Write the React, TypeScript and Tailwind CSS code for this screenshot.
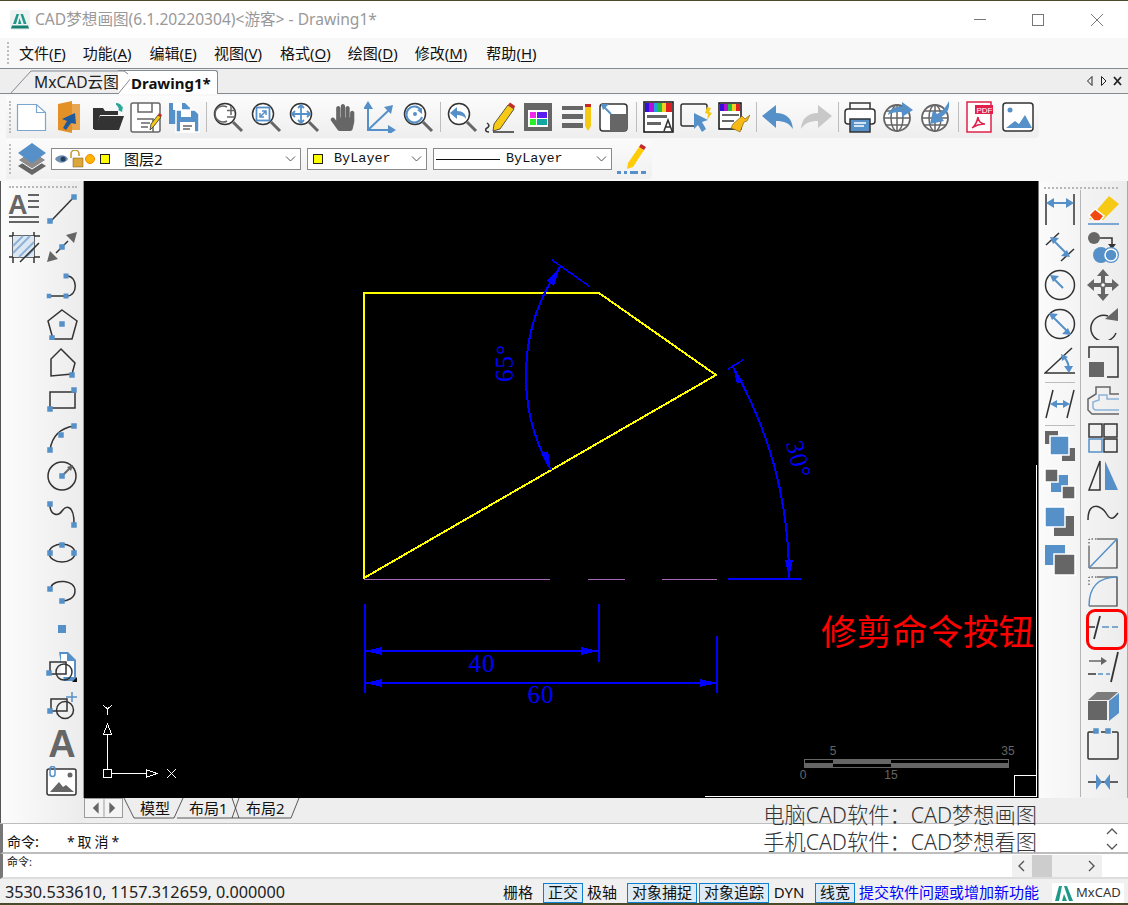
import type { ReactNode } from "react";
import { FaHandPaper } from "react-icons/fa";

const B = "#5590c8";
const G = "#666666";
const D = "#333333";

function Ic({ children, size = 32 }: { children?: ReactNode; size?: number }) {
  return (
    <svg width={size} height={size} viewBox="0 0 32 32" fill="none" stroke={D} strokeWidth={1.5}>
      {children}
    </svg>
  );
}

function N({ x, y, s = 5.5 }: { x: number; y: number; s?: number }) {
  return <rect x={x - s / 2} y={y - s / 2} width={s} height={s} fill={B} stroke="none" />;
}

function Lens({ children }: { children?: ReactNode }) {
  return (
    <Ic>
      <circle cx="13" cy="13" r="10.5" fill="#fff" stroke={D} />
      <path d="M21 21l9 9" stroke={G} strokeWidth={3} />
      {children}
    </Ic>
  );
}

function Logo({ size }: { size: number }) {
  return (
    <svg width={size} height={size} viewBox="0 0 20 20">
      <rect width="20" height="20" rx="2" fill="#eef3f2" />
      <path d="M3 14L6.5 4h2.5L6 14zM8 14l1.5-6 2 6zM10.5 4H13l3.500 10h-2.800z" fill="#1f9a8a" />
      <path d="M2 15.500h16l1 3H1z" fill="#15806f" />
    </svg>
  );
}

const topIcons: ReactNode[][] = [
  [
    <Ic key="new"><path d="M1.500 3.500h19l9 8v18h-28z" stroke="#7aa7d0" strokeWidth={1.200} fill="#fff" /><path d="M20.500 3.500v8h9" stroke="#7aa7d0" strokeWidth={1.200} /></Ic>,
    <Ic key="forange"><path d="M4 3L18 0v32L4 29z" fill="#e39027" stroke="none" /><path d="M18 3h8v26h-8z" fill="#e8a650" stroke="none" /><path d="M21 12l1 11-5-1-5 7-3-2 4-7-5-2z" fill="#1e5a9c" stroke="none" /></Ic>,
    <Ic key="open"><path d="M1 28V7h10l2 3h13v4H8L4 28z" fill="#333" stroke="none" /><path d="M8 15h24l-5 14H2z" fill="#333" stroke="none" /><path d="M24 2c3 0 5 1 6 4l1-1-1 6-4-2 1-1c-1-2-2-4-3-4z" fill="#2aa79b" stroke="none" /></Ic>,
    <Ic key="saveas"><rect x="1" y="2" width="29" height="29" rx="2" stroke={G} fill="#fff" /><path d="M8 2v9h14V2M7 18h16v13M11 22h9M11 26h7" stroke={G} /><path d="M20 29l1-6 7-9 3 2-7 9z" fill="#f6c915" stroke={D} strokeWidth={0.8} /><path d="M28 14l1-2 3 2-1 2z" fill="#c62828" stroke="none" /></Ic>,
    <Ic key="saveall"><path d="M1 2h16l5 5v16H1z" fill={B} stroke="none" /><path d="M5 2h9v7H5z" fill="#fff" stroke="none" /><path d="M8 9h19l4 4v18H8z" fill={B} stroke="#fff" /><path d="M13 9h10v7H13zM12 21h15v10H12z" fill="#fff" stroke="none" /><path d="M15 25h9M15 28h7" stroke={G} /></Ic>,
  ],
  [
    <Lens key="z1"><path d="M15 6a8 8 0 1 0 0 14M19 5v9M15 9.500h9M15 16h9" stroke={G} /></Lens>,
    <Lens key="z2"><rect x="6.500" y="6.500" width="13" height="13" stroke={B} strokeWidth={1.8} /><path d="M10 16l6-6M12 10h4v4M10 12v4h4" stroke={B} /></Lens>,
    <Lens key="z3"><path d="M13 4v18M4 13h18M10 7l3-3 3 3M10 19l3 3 3-3M7 10l-3 3 3 3M19 10l3 3-3 3" stroke={B} strokeWidth={1.8} /></Lens>,
    <span key="hand" className="text-[#666666] text-[27px] leading-none"><FaHandPaper /></span>,
    <Ic key="axes"><path d="M4 3v26h26M4 29l21-20" stroke={B} strokeWidth={2} /><path d="M4 0l5 8H-1zM32 29l-8 5v-10zM29 4l-2 9-7-7z" fill={B} stroke="none" /></Ic>,
    <Lens key="z4"><path d="M19 9a8 8 0 1 0 1 7" stroke={B} strokeWidth={2} /><circle cx="13" cy="13" r="2" fill={B} stroke="none" /><path d="M15 9l5-2v6z" fill={B} stroke="none" /></Lens>,
  ],
  [
    <Lens key="z5"><path d="M4 12l7-6v4c6 0 9 3 9 8-2-3-5-4-9-4v4z" fill={B} stroke="none" /></Lens>,
    <Ic key="pen"><path d="M5 31c-4 0-4-3-2-4s3-3 0-5M9 31h21" stroke={D} /><path d="M9 30l1-7L24 4l6 4-14 20z" fill="#f6c915" stroke={D} strokeWidth={0.8} /><path d="M24 4l2-2.500 5 3.500-1 3z" fill="#c62828" stroke="none" /></Ic>,
    <Ic key="tbl"><rect x="2" y="2" width="28" height="28" fill={G} stroke="none" /><rect x="6" y="9" width="20" height="17" fill="#fff" stroke="none" /><rect x="8" y="11" width="6" height="6" fill="#f028e8" stroke="none" /><rect x="15" y="11" width="10" height="6" fill="#5a1cf0" stroke="none" /><rect x="8" y="18" width="6" height="6" fill="#28f028" stroke="none" /><rect x="15" y="18" width="10" height="6" fill="#10a8a0" stroke="none" /></Ic>,
    <Ic key="ll"><path d="M2 5h21v4H2zM2 13h21v5H2zM2 22h21v5H2z" fill={G} stroke="none" /><path d="M25 5h6v20l-3 5-3-5z" fill="#f6c915" stroke="none" /><path d="M25 3h6v3h-6z" fill="#c62828" stroke="none" /></Ic>,
    <Ic key="cut"><rect x="2" y="3" width="27" height="27" rx="3" stroke={D} fill="#fff" /><path d="M12 13h17v15a2 2 0 0 1-2 2H12z" fill={G} stroke="none" /><path d="M4 4l9 9" stroke={B} strokeWidth={2} /><path d="M3 3h8l-6 6z" fill={B} stroke="none" /></Ic>,
  ],
  [
    <Ic key="c1"><rect x="2" y="1" width="29" height="30" stroke="#111" strokeWidth={1.500} fill="#fff" /><path d="M3 2h4v9H3z" fill="#3410d8" stroke="none" /><path d="M7 2h5v9H7z" fill="#b010d8" stroke="none" /><path d="M12 2h4v9h-4z" fill="#20a0e0" stroke="none" /><path d="M16 2h4v9h-4z" fill="#20c040" stroke="none" /><path d="M20 2h4v9h-4z" fill="#f0d020" stroke="none" /><path d="M24 2h6v9h-6z" fill="#e02020" stroke="none" /><path d="M5 14h20v3H5zM5 21h14v3H5z" fill={G} stroke="none" /><path d="M22 30l4-11 4 11M24 26h4" stroke={D} /></Ic>,
    <Ic key="c2"><path d="M14 25H3a2 2 0 0 1-2-2V5a2 2 0 0 1 2-2h22a2 2 0 0 1 2 2v5" stroke={D} /><path d="M14 12l14 7-6 2 4 7-4 3-4-7-4 4z" fill={B} stroke="none" /><path d="M27 6l4 1-2 4 3 1-5 7 1-6-3-1z" fill="#f6c915" stroke="none" /></Ic>,
    <Ic key="c3"><rect x="1" y="2" width="22" height="26" stroke="#111" fill="#fff" /><path d="M2 3h4v7H2z" fill="#3410d8" stroke="none" /><path d="M6 3h4v7H6z" fill="#b010d8" stroke="none" /><path d="M10 3h4v7h-4z" fill="#20c040" stroke="none" /><path d="M14 3h4v7h-4z" fill="#f0d020" stroke="none" /><path d="M18 3h4v7h-4z" fill="#e02020" stroke="none" /><path d="M4 13h17v2H4zM4 19h12v2H4z" fill={G} stroke="none" /><path d="M15 23l9-8 3 3 5-4-3 6-3 1-4 10-4-2-5-2z" fill="#f6b915" stroke="#8a6a10" strokeWidth={0.7} /></Ic>,
  ],
  [
    <Ic key="undo"><path d="M0 15L14 4v8c10 0 16 5 17 16-4-6-9-8-17-8v7z" fill={B} stroke="none" /></Ic>,
    <Ic key="redo"><path d="M32 15L18 4v8C8 12 2 17 1 28c4-6 9-8 17-8v7z" fill="#c8c8c8" stroke="none" /></Ic>,
  ],
  [
    <Ic key="print"><path d="M6 8V2h20v6" stroke={D} /><rect x="1" y="8" width="30" height="15" rx="3" stroke={D} fill="#fff" /><rect x="6" y="18" width="20" height="13" fill={B} stroke={D} /><path d="M10 22h12M10 25h10" stroke="#fff" /></Ic>,
    <Ic key="g1"><circle cx="15" cy="17" r="13" stroke={G} strokeWidth={1.800} fill="#fff" /><ellipse cx="15" cy="17" rx="6" ry="13" stroke={G} strokeWidth={1.500} /><path d="M2 17h26M4 10h22M4 24h22M15 4v26" stroke={G} strokeWidth={1.500} /><path d="M6 14c1-6 7-9 14-8V1l11 8-11 7v-5c-5 0-10 0-14 3z" fill={B} stroke="none" /></Ic>,
    <Ic key="g2"><circle cx="15" cy="17" r="13" stroke={G} strokeWidth={1.800} fill="#fff" /><ellipse cx="15" cy="17" rx="6" ry="13" stroke={G} strokeWidth={1.500} /><path d="M2 17h26M4 10h22M4 24h22M15 4v26" stroke={G} strokeWidth={1.500} /><path d="M29 0c1 8-2 13-8 16l3 4-14 3 3-14 4 4c5-2 9-7 12-13z" fill={B} stroke="none" /></Ic>,
  ],
  [
    <Ic key="pdf"><rect x="3" y="1" width="24" height="30" stroke="#e0204a" fill="#fff" /><rect x="11" y="4" width="18" height="9" fill="#e0204a" stroke="none" /><text x="12.500" y="11.500" fontSize="8" fill="#fff" stroke="none" fontFamily="Liberation Sans">PDF</text><path d="M8 27c3-2 5-6 6-11 0 4 3 7 7 7-4 0-9 1-13 4z" stroke="#e0204a" strokeWidth={1.500} /></Ic>,
    <Ic key="img"><rect x="1" y="2" width="30" height="28" rx="3" stroke={D} fill="#fff" /><circle cx="8" cy="9" r="2.500" fill={B} stroke="none" /><path d="M4 27l9-7 4 3 6-9 7 13z" fill={B} stroke="none" /></Ic>,
  ],
];

const leftIcons: (ReactNode | null)[] = [
  <div key="mt" className="relative w-[32px] h-[32px]">
    <span className="absolute left-0 top-0 text-[27px] leading-[24px] font-bold text-[#666666] font-['Liberation_Sans',sans-serif]">A</span>
    <Ic><path d="M20 2h11M20 8h11M20 14h11M1 24h30M1 29h30" stroke={D} /></Ic>
  </div>,
  <Ic key="line"><path d="M5 28L28 4" stroke={D} /><N x={28} y={4} /><N x={4} y={28} /></Ic>,
  <Ic key="hatch"><path d="M5 1v31M26 1v31M1 5h31M1 26h31" stroke={D} /><path d="M5 5h21v21H5z" fill="#dde7f2" stroke="none" /><path d="M5 15l10-10M5 22L22 5M11 26L26 11M18 26l8-8" stroke="#8cb2d8" strokeWidth={2} /><path d="M12 31L31 12" stroke={D} /></Ic>,
  <Ic key="xl"><path d="M10 22l12-12" stroke={D} /><path d="M31 1l-3 11-8-8zM1 31l3-11 8 8z" fill={G} stroke="none" /><N x={16} y={16} /></Ic>,
  null,
  <Ic key="pl"><path d="M5 27h16c11 0 11-20 0-20" stroke={D} /><N x={20} y={7} s={5} /><N x={20} y={27} s={5} /><N x={3} y={27} s={4.500} /></Ic>,
  null,
  <Ic key="pent"><path d="M16 2l15 11-5 18H7L2 13z" stroke={D} /><N x={16} y={16} /><N x={6} y={30} /></Ic>,
  null,
  <Ic key="poly"><path d="M15 3l14 14-3 11-21 2V13z" stroke={D} /><N x={26} y={29} /></Ic>,
  null,
  <Ic key="rect"><rect x="4" y="8" width="25" height="16" stroke={D} /><N x={28} y={6} /><N x={4} y={25} /></Ic>,
  null,
  <Ic key="arc"><path d="M4 28C6 14 15 6 28 4" stroke={D} /><N x={28} y={4} /><N x={15} y={13} /><N x={4} y={28} /></Ic>,
  null,
  <Ic key="cir"><circle cx="16" cy="16" r="14" stroke={D} /><path d="M16 16l9-9" stroke={G} strokeWidth={2} /><path d="M27 5l-2 6-4-4z" fill={G} stroke="none" /><N x={16} y={16} /></Ic>,
  null,
  <Ic key="spl"><path d="M4 6c0 10 8 12 12 6s12-6 12 12" stroke={D} /><N x={4} y={5} /><N x={28} y={26} /></Ic>,
  null,
  <Ic key="ell"><ellipse cx="16" cy="16" rx="13" ry="9" stroke={D} /><N x={16} y={8} /><N x={4} y={16} /><N x={28} y={16} /></Ic>,
  null,
  <Ic key="ela"><path d="M5 12c3-8 24-8 24 4 0 8-9 10-13 10" stroke={D} /><N x={4} y={14} /><N x={16} y={26} /></Ic>,
  null,
  <Ic key="pt"><N x={16} y={16} s={8} /></Ic>,
  null,
  <Ic key="blk"><path d="M13 1h9l8 8v21h-12z" fill={B} stroke="none" /><path d="M15 3h6v7h7v16H15z" fill="#fff" stroke="none" /><path d="M26 31l5-5v5z" fill="#111" stroke="none" /><rect x="4" y="11" width="16" height="12" stroke={D} /><circle cx="18" cy="21" r="8" stroke={D} /><N x={3} y={22} /></Ic>,
  null,
  <Ic key="ins"><rect x="5" y="9" width="16" height="12" stroke={D} /><circle cx="19" cy="20" r="8.500" stroke={D} /><path d="M26 2v10M20 7h11" stroke={B} /><N x={4} y={21} /></Ic>,
  null,
  <span key="txt" className="text-[38px] leading-[34px] font-bold text-[#666666] font-['Liberation_Sans',sans-serif]">A</span>,
  null,
  <Ic key="pic"><rect x="1" y="3" width="29" height="26" rx="2" stroke={D} fill="#fff" /><path d="M4 26l9-10 4 5 3-2 8 7z" fill={G} stroke="none" /><circle cx="24" cy="9" r="2.500" fill={G} stroke="none" /><path d="M4 8V3a2 2 0 0 1 5 0v5a2 2 0 0 1-5 0" stroke={B} /></Ic>,
];

function Sq({ order }: { order: number }) {
  if (order === 0)
    return <Ic><rect x="1" y="1" width="13" height="13" fill={G} stroke="none" /><rect x="18" y="18" width="13" height="13" fill={G} stroke="none" /><rect x="6" y="6" width="19" height="19" fill={B} stroke="#fff" /></Ic>;
  if (order === 1)
    return <Ic><rect x="7" y="7" width="17" height="17" fill={B} stroke="none" /><rect x="1" y="1" width="13" height="13" fill={G} stroke="#fff" /><rect x="18" y="18" width="13" height="13" fill={G} stroke="#fff" /></Ic>;
  if (order === 2)
    return <Ic><rect x="10" y="10" width="20" height="20" fill={G} stroke="none" /><rect x="1" y="1" width="20" height="20" fill={B} stroke="#fff" /></Ic>;
  return <Ic><rect x="1" y="1" width="20" height="20" fill={B} stroke="none" /><rect x="10" y="10" width="21" height="21" fill={G} stroke="#fff" /></Ic>;
}

const dimA: ReactNode[] = [
  <Ic key="d1"><path d="M2 1v31M30 1v31" stroke={D} /><path d="M5 10h22" stroke={B} strokeWidth={2} /><path d="M2 10l8-5v10zM30 10l-8-5v10z" fill={B} stroke="none" /></Ic>,
  <Ic key="d2"><path d="M2 14L15 2M17 30L30 18" stroke={D} /><path d="M8 8l16 16" stroke={B} strokeWidth={2} /><path d="M6 6l9 1-6 6zM26 26l-9-1 6-6z" fill={B} stroke="none" /></Ic>,
  <Ic key="d3"><circle cx="16" cy="16" r="14.500" stroke={D} /><path d="M8 8l11 11" stroke={B} strokeWidth={2} /><path d="M6 6l9 1-6 6z" fill={B} stroke="none" /></Ic>,
  <Ic key="d4"><circle cx="16" cy="16" r="14.500" stroke={D} /><path d="M7 7l18 18" stroke={B} strokeWidth={2} /><path d="M5 5l9 1-6 6zM27 27l-9-1 6-6z" fill={B} stroke="none" /></Ic>,
  <Ic key="d5"><path d="M28 2L1 27h30" stroke={D} /><path d="M20 11c4 4 5 8 5 14" stroke={B} strokeWidth={2} /><path d="M17 8l7 3-6 4zM25 27l-5-7h9z" fill={B} stroke="none" /></Ic>,
];

const rightIcons: ReactNode[] = [
  <Ic key="e"><path d="M2 26L22 3l10 8-16 16H6z" fill="#f6c915" stroke="none" /><path d="M2 22l6-6 9 7-4 5H7z" fill="#f04a10" stroke="#fff" /><path d="M1 31h31" stroke={B} /></Ic>,
  <Ic key="m"><circle cx="7" cy="7" r="6" fill={G} stroke="none" /><path d="M13 7h12v8" stroke={D} /><path d="M21 13h8l-4 5z" fill={D} stroke="none" /><circle cx="24" cy="24" r="7" fill="none" stroke={B} strokeWidth={2} /><circle cx="14" cy="24" r="8" fill={B} stroke="none" /><circle cx="24" cy="24" r="6" fill={B} stroke="#fff" /></Ic>,
  <Ic key="mv"><path d="M16 0l6 7h-4v7h7v-4l7 6-7 6v-4h-7v7h4l-6 7-6-7h4v-7H7v4l-7-6 7-6v4h7V7h-4z" fill={G} stroke="none" /><circle cx="16" cy="16" r="2.500" fill="#fff" stroke={G} /></Ic>,
  <Ic key="ro"><path d="M21 8a13 13 0 1 0 8 17" stroke={D} /><path d="M18 11L31 0v13z" fill={G} stroke="none" /></Ic>,
  <Ic key="sc"><path d="M2 12V1h29v30H20" stroke={D} /><rect x="2" y="16" width="15" height="15" fill={G} stroke="none" /></Ic>,
  <Ic key="of"><path d="M32 10h-9V3H9v7L1 15v11l4 4h27" stroke={G} /><path d="M32 15H20v-4h-8v5l-6 2v6l2 2h24" stroke="#8cb2d8" /></Ic>,
  <Ic key="ar"><rect x="2" y="2" width="13" height="13" stroke={D} /><rect x="17" y="2" width="13" height="13" stroke={D} /><rect x="2" y="17" width="13" height="13" stroke={B} /><rect x="17" y="17" width="13" height="13" stroke={D} /></Ic>,
  <Ic key="mi"><path d="M13 1L2 30h11z" stroke={D} /><path d="M18 1l13 29H18z" fill={B} stroke="none" /></Ic>,
  <Ic key="sp"><path d="M1 21c0-20 14-14 18-7s7 7 12 0" stroke={D} /></Ic>,
  <Ic key="ch"><path d="M2 10V2h8" stroke={D} strokeWidth={1} strokeDasharray="1.500 2" /><path d="M10 2h20v29H2" stroke={D} strokeWidth={1.200} /><path d="M2 31V10" stroke={D} strokeWidth={1} /><path d="M2 31L30 2" stroke={B} strokeWidth={1.500} /></Ic>,
  <Ic key="fi"><path d="M2 10V2h8" stroke={D} strokeWidth={1} strokeDasharray="1.500 2" /><path d="M10 2h20v29H2" stroke={D} strokeWidth={1.200} /><path d="M2 31C2 12 12 2 30 2" stroke={B} strokeWidth={1.500} /></Ic>,
  <Ic key="tr"><path d="M1 14h7" stroke={D} /><path d="M13 3L7 26" stroke={D} strokeWidth={1.800} /><path d="M15 14h7M25 14h6" stroke={B} /></Ic>,
  <Ic key="ex"><path d="M2 10h13" stroke={G} strokeWidth={1.500} /><path d="M14 6l6 4-6 4z" fill={G} stroke="none" /><path d="M1 23h8" stroke={D} /><path d="M11 23h5M19 23h4" stroke={B} /><path d="M31 1l-7 30" stroke={D} strokeWidth={1.800} /></Ic>,
  <Ic key="bx"><path d="M10 2h21l-9 8H1z" fill={G} stroke="none" opacity="0.85" /><rect x="1" y="11" width="19" height="19" fill={G} stroke="none" /><path d="M22 11l10-8v20l-10 8z" fill={B} stroke="none" /></Ic>,
  <Ic key="br"><path d="M7 4H2a1 1 0 0 0-1 1v25a1 1 0 0 0 1 1h28a1 1 0 0 0 1-1V5a1 1 0 0 0-1-1h-5M14 4h5" stroke={D} /><N x={9} y={3} /><N x={21} y={3} /></Ic>,
  <Ic key="jo"><path d="M1 16h30" stroke={D} /><path d="M9 8l6 8-6 8zM23 8l-6 8 6 8z" fill={B} stroke="none" /></Ic>,
];

function Grip({ w }: { w: string }) {
  return <div className={`${w} h-[2px] border-t-2 border-dotted border-[#b8b8b8]`} />;
}

function ToolSep() {
  return (
    <div className="w-[6px] flex justify-center">
      <div className="w-px h-[30px] bg-[#bdbdbd]" />
    </div>
  );
}

function Combo({ className, children }: { className: string; children: ReactNode }) {
  return (
    <div className={`${className} relative flex items-center h-[22px] bg-white border border-[#8a8a8a]`}>
      {children}
      <svg className="absolute right-[4px] top-[6px]" width="11" height="8" viewBox="0 0 11 8" fill="none" stroke="#555">
        <path d="M1 1.500l4.500 4.500 4.500-4.500" />
      </svg>
    </div>
  );
}

function Menu({ label, k, ml }: { label: string; k: string; ml: string }) {
  return (
    <span className={ml}>
      {label}(<span className="underline underline-offset-2">{k}</span>)
    </span>
  );
}

function StatusBtn({ text, on, className }: { text: string; on?: boolean; className: string }) {
  return (
    <div
      className={`${className} h-[20px] flex items-center justify-center ${
        on ? "border border-[#0f7fd0] bg-[#dcebf6]" : ""
      }`}
    >
      {text}
    </div>
  );
}

function Drawing() {
  const blue = "#0000ff";
  const dim = "font-['Liberation_Serif',serif] text-[25px] tracking-[1px]";
  return (
    <svg width="954" height="617" viewBox="84 181 954 617" className="block" fill="none" shapeRendering="crispEdges">
      <path d="M364 293H599L716 375L364 578Z" stroke="#ffff00" strokeWidth={2} />
      <path d="M364 579H550M588 579H625M662 579H717" stroke="#a868b8" strokeWidth={1} />
      <path d="M728 578.500H801" stroke={blue} strokeWidth={2} />
      <path d="M560 267A190 190 0 0 0 551 470" stroke={blue} strokeWidth={2} />
      <path d="M552 260L589 286M728 369L743 360" stroke={blue} strokeWidth={1.500} />
      <path d="M560 267L554 286L547 281ZM551 470L541 454L548 451ZM733 367L743 381L737 384ZM789 578L785 560H793Z" fill={blue} />
      <path d="M733 367A425 425 0 0 1 789 578" stroke={blue} strokeWidth={2} />
      <text transform="translate(513 382) rotate(-90)" className={dim} fill={blue}>65°</text>
      <text transform="translate(786 443) rotate(76)" className={dim} fill={blue}>30°</text>
      <path d="M364.500 604V693M598.500 604V662M717 636V693M364 651H598M364 683H717" stroke={blue} strokeWidth={2} />
      <path d="M365 651L382 647V655ZM598 651L581 647V655ZM365 683L382 679V687ZM717 683L700 679V687Z" fill={blue} />
      <text x="482" y="672" textAnchor="middle" className={dim} fill={blue}>40</text>
      <text x="541" y="703" textAnchor="middle" className={dim} fill={blue}>60</text>
      <text x="821" y="645" fontFamily="Noto Sans CJK SC" fontSize="35.500" fill="#ff0000">修剪命令按钮</text>

      <g stroke="#ffffff" strokeWidth={1}>
        <rect x="103.500" y="769.500" width="8" height="8" />
        <path d="M107.500 769V734M103.500 734L107.500 724L111.500 734ZM112 773.500H146M146 769.500L157 773.500L146 777.500Z" />
        <path d="M103 705L107.500 709L112 705M107.500 709V715M167 769L176 778M176 769L167 778" />
        <path d="M1036.500 465V796.500H705M1014.500 796V775.500H1036" />
      </g>
      <g fill="#666666">
        <rect x="804.500" y="759.500" width="204" height="8" stroke="#666666" fill="none" />
        <path d="M804 763h29v5h-29zM833 759h58v5h-58zM891 763h117v5H891z" />
        <text x="833" y="755" textAnchor="middle" fontSize="12" fontFamily="Liberation Sans">5</text>
        <text x="1008" y="755" textAnchor="middle" fontSize="12" fontFamily="Liberation Sans">35</text>
        <text x="803" y="779" textAnchor="middle" fontSize="12" fontFamily="Liberation Sans">0</text>
        <text x="891" y="779" textAnchor="middle" fontSize="12" fontFamily="Liberation Sans">15</text>
      </g>
    </svg>
  );
}

export default function App() {
  return (
    <div className="w-[1128px] h-[905px] overflow-hidden flex flex-col bg-[#f0f0f0] text-[#111] text-[14px] font-['Noto_Sans','Noto_Sans_CJK_SC',sans-serif]">
      <div className="h-px shrink-0 bg-[#4a4a2a]" />

      {/* title bar */}
      <div className="h-[37px] shrink-0 bg-white flex items-center pl-[10px] relative">
        <Logo size={20} />
        <span className="ml-[5px] text-[15.600px] text-[#999999]">CAD梦想画图(6.1.20220304)&lt;游客&gt; - Drawing1*</span>
        <div className="ml-auto flex items-center">
          <div className="w-[12px] h-px bg-[#777]" />
          <div className="ml-[46px] w-[12px] h-[12px] border border-[#777]" />
          <svg className="ml-[47px] mr-[25px]" width="12" height="12" viewBox="0 0 12 12" stroke="#777">
            <path d="M0 0l12 12M12 0L0 12" />
          </svg>
        </div>
      </div>

      {/* menu */}
      <div className="h-[30px] shrink-0 bg-[#f8f8f8] flex items-center pl-[7px] text-[15px] whitespace-nowrap">
        <div className="h-[22px] border-l-2 border-dotted border-[#bdbdbd] mr-[10px]" />
        <Menu label="文件" k="F" ml="" />
        <Menu label="功能" k="A" ml="ml-[17px]" />
        <Menu label="编辑" k="E" ml="ml-[18px]" />
        <Menu label="视图" k="V" ml="ml-[17px]" />
        <Menu label="格式" k="O" ml="ml-[18px]" />
        <Menu label="绘图" k="D" ml="ml-[17px]" />
        <Menu label="修改" k="M" ml="ml-[17px]" />
        <Menu label="帮助" k="H" ml="ml-[19px]" />
      </div>

      {/* document tabs */}
      <div className="h-[26px] shrink-0 bg-[#eeeeee] border-y border-[#838a92] flex items-end relative text-[15.600px] whitespace-nowrap">
        <div className="ml-[34px] w-[97px] h-[23px] leading-[24px] text-[#222]">MxCAD云图</div>
        <div className="absolute left-[118px] bottom-[-1px] h-[24px] w-[100px] bg-white border-r border-t border-[#838a92] rounded-tr-[3px] pl-[13px] leading-[24px] text-[15px] font-bold">
          Drawing1*
        </div>
        <svg className="absolute left-[10px] bottom-[-1px]" width="120" height="24" fill="none" stroke="#838a92">
          <path d="M0 24L21 1H114l4 3" />
          <path d="M108 24L126 2" stroke="#838a92" />
        </svg>
        <svg className="absolute right-[6px] top-[6px]" width="36" height="12" viewBox="0 0 36 12" fill="none" stroke="#222">
          <path d="M6 1.500L1.500 6 6 10.500zM15.500 1.500L20 6l-4.500 4.500z" />
          <path d="M28 2l7 8M35 2l-7 8" strokeWidth={1.800} />
        </svg>
      </div>

      {/* toolbars */}
      <div className="h-[87px] shrink-0 bg-[#f8f8f8] pt-[2px] relative">
        <div className="ml-[6px] w-[1033px] h-[42px] rounded-r-[4px] bg-gradient-to-b from-[#fcfcfc] to-[#eeeeee] flex items-center">
          <div className="w-[7px] h-[32px] border-l-2 border-dotted border-[#bdbdbd] ml-[3px] mr-[-3px]" />
          {topIcons.map((group, i) => (
            <div key={i} className="flex items-center">
              {i > 0 && <ToolSep />}
              {group.map((icon, j) => (
                <div key={j} className="w-[38px] h-[38px] flex items-center justify-center">
                  {icon}
                </div>
              ))}
            </div>
          ))}
        </div>
        <div className="ml-[6px] mt-[1px] w-[646px] h-[40px] rounded-r-[4px] bg-gradient-to-b from-[#fbfbfb] to-[#f0f0f0] flex items-center">
          <div className="w-[5px] h-[30px] border-l-2 border-dotted border-[#bdbdbd] ml-[3px]" />
          <svg className="ml-[4px]" width="28" height="32" viewBox="0 0 28 32">
            <path d="M14 14L28 23 14 32 0 23z" fill={G} />
            <path d="M14 8L28 17 14 26 0 17z" fill="#8c8c8c" stroke="#fff" />
            <path d="M14 0L28 10 14 20 0 10z" fill={B} />
          </svg>
          <Combo className="ml-[5px] w-[250px]">
            <svg className="ml-[2px]" width="56" height="18" viewBox="0 0 56 18">
              <path d="M1 9c3-5 11-5 13 0-3 5-10 5-13 0z" fill="#6f8fae" />
              <circle cx="9" cy="9" r="2.500" fill="#23415f" />
              <path d="M17 8V4a4 4 0 0 1 8 0v2" fill="none" stroke="#c8942a" strokeWidth={1.500} />
              <rect x="19" y="8" width="10" height="9" fill="#dba63a" stroke="#7a5a18" strokeWidth={0.500} />
              <circle cx="36" cy="9" r="4.500" fill="#ffb400" stroke="#f08a00" />
              <rect x="46.500" y="4.500" width="9" height="9" fill="#ffff00" stroke="#222" />
            </svg>
            <span className="ml-[14px] text-[#111] text-[15px]">图层2</span>
          </Combo>
          <Combo className="ml-[6px] w-[120px]">
            <div className="ml-[5px] w-[10px] h-[10px] bg-[#ffff00] border border-[#222]" />
            <span className="ml-[11px] pt-[1px] font-['Liberation_Mono',monospace] text-[13.500px]">ByLayer</span>
          </Combo>
          <Combo className="ml-[6px] w-[179px]">
            <div className="ml-[2px] w-[64px] h-px bg-[#111]" />
            <span className="ml-[6px] pt-[1px] font-['Liberation_Mono',monospace] text-[13.500px]">ByLayer</span>
          </Combo>
          <svg className="ml-[5px]" width="30" height="32" viewBox="0 0 30 32">
            <path d="M10 26l1-6L22 4l5 3-11 17z" fill="#ffcb05" />
            <path d="M22 4l2-3 5 3-2 3z" fill="#c62828" />
            <path d="M0 28h4v3H0zM7 28h3v3H7zM13 28h8v3h-8zM24 28h5v3h-5z" fill={B} />
          </svg>
        </div>
      </div>

      {/* main */}
      <div className="h-[617px] shrink-0 flex">
        <div className="w-[84px] shrink-0 pl-[1px] border-l border-[#555] bg-gradient-to-r from-[#fcfcfc] to-[#ececec] relative border-r border-r-[#9a9a9a]">
          <div className="pl-[7px] pt-[5px] h-[9px]">
            <Grip w="w-[68px]" />
          </div>
          <div className="grid grid-cols-[38px_38px] auto-rows-[38.200px] ml-[3px]">
            {leftIcons.map((icon, i) => (
              <div key={i} className="flex items-center justify-center">
                {icon}
              </div>
            ))}
          </div>
        </div>

        <div className="w-[954px] shrink-0 bg-black">
          <Drawing />
        </div>

        <div className="flex-1 bg-gradient-to-r from-[#fbfbfb] to-[#ececec] border-l border-[#777] border-r border-r-[#aaaaaa] relative">
          <div className="pl-[5px] pt-[6px] h-[9px]">
            <Grip w="w-[74px]" />
          </div>
          <div className="flex">
            <div className="w-[42px] flex flex-col items-center border-r border-[#b5b5b5] h-[607px]">
              {dimA.map((icon, i) => (
                <div key={i} className="h-[38.200px] flex items-center">
                  {icon}
                </div>
              ))}
              <div className="w-[30px] h-px bg-[#bdbdbd] my-[1px]" />
              <div className="h-[40px] flex items-center">
                <Ic>
                  <path d="M9 2L2 30M30 2l-7 28" stroke={D} />
                  <path d="M8 16h16" stroke={B} strokeWidth={2} />
                  <path d="M6 16l7-4v8zM26 16l-7-4v8z" fill={B} stroke="none" />
                </Ic>
              </div>
              <div className="w-[30px] h-px bg-[#bdbdbd] my-[1px]" />
              {[0, 1, 2, 3].map((o) => (
                <div key={o} className="h-[38px] flex items-center">
                  <Sq order={o} />
                </div>
              ))}
            </div>
            <div className="w-[44px] flex flex-col items-center">
              {rightIcons.map((icon, i) => (
                <div key={i} className="h-[38.200px] flex items-center shrink-0">
                  {icon}
                </div>
              ))}
            </div>
          </div>
          <div className="absolute left-[47px] top-[428px] w-[41px] h-[41px] border-[3px] border-[#ff0000] rounded-[9px]" />
        </div>
      </div>

      {/* layout tabs */}
      <div className="h-[26px] shrink-0 flex bg-[#eeeeee] whitespace-nowrap border-b border-[#bdbdbd]">
        <div className="w-[84px] shrink-0 border-l border-[#555] bg-gradient-to-r from-[#fcfcfc] to-[#ececec]" />
        <div className="w-[39px] h-[20px] border border-[#9a9a9a] flex items-center bg-[#f4f4f4]">
          <svg width="38" height="18" viewBox="0 0 38 18" fill={G}>
            <path d="M14 3v12l-6-6zM25 3v12l6-6z" />
            <path d="M19.500 0v18" stroke="#9a9a9a" />
          </svg>
        </div>
        <div className="relative w-[180px] h-[20px] text-[15px] leading-[20px]">
          <svg className="absolute left-0 top-0" width="180" height="21" viewBox="0 0 180 21" fill="none" stroke="#333" strokeWidth={0.800}>
            <path d="M1 0L11 20H51L60 0M54 20H116L109 0M109 20L116 0M116 20H168L176 0" />
          </svg>
          <span className="absolute left-[17px] top-0">模型</span>
          <span className="absolute left-[66px] top-0">布局1</span>
          <span className="absolute left-[123px] top-0">布局2</span>
        </div>
        <div className="ml-auto mr-[91px] text-[21.250px] leading-[22px] font-light text-[#333] z-10 pt-[6px]">
          电脑CAD软件：CAD梦想画图
        </div>
      </div>

      {/* command area */}
      <div className="h-[30px] shrink-0 bg-white border-l-[3px] border-[#777] flex items-center pt-[7px] border-b-2 border-b-[#bdbdbd] whitespace-nowrap relative">
        <span className="ml-[4px] text-[14px] font-['Noto_Sans_CJK_SC',sans-serif]">命令:</span>
        <span className="ml-[28px] text-[14px] tracking-[3px]">*取消*</span>
        <span className="ml-auto mr-[91px] text-[21.250px] leading-[22px] font-light text-[#333]">手机CAD软件：CAD梦想看图</span>
        <svg className="absolute right-[8px] top-[3px]" width="16" height="24" viewBox="0 0 16 24" fill="none" stroke="#555" strokeWidth={1.300}>
          <path d="M3 7l5-5 5 5M3 17l5 5 5-5" />
        </svg>
      </div>
      <div className="h-[25px] shrink-0 bg-white border-l-[3px] border-[#777] flex whitespace-nowrap border-b-2 border-b-[#dddddd]">
        <span className="ml-[4px] text-[11px] leading-[15px]">命令:</span>
        <div className="ml-auto mr-[26px] mt-[1px] w-[90px] h-[22px] bg-[#f0f0f0] flex items-center">
          <svg className="ml-[5px]" width="10" height="12" viewBox="0 0 10 12" fill="none" stroke="#555" strokeWidth={1.400}>
            <path d="M7 1L2 6l5 5" />
          </svg>
          <div className="ml-[5px] w-[20px] h-[22px] bg-[#cdcdcd]" />
          <svg className="ml-[34px]" width="10" height="12" viewBox="0 0 10 12" fill="none" stroke="#555" strokeWidth={1.400}>
            <path d="M3 1l5 5-5 5" />
          </svg>
        </div>
      </div>

      {/* status bar */}
      <div className="h-[24px] shrink-0 bg-[#f0f0f0] flex items-center pt-[3px] whitespace-nowrap text-[15px]">
        <span className="ml-[5px] w-[498px] text-[16.200px] text-[#222]">3530.533610, 1157.312659, 0.000000</span>
        <StatusBtn text="栅格" className="w-[30px]" />
        <StatusBtn text="正交" on className="ml-[10px] w-[40px]" />
        <StatusBtn text="极轴" className="ml-[4px] w-[30px]" />
        <StatusBtn text="对象捕捉" on className="ml-[10px] w-[70px]" />
        <StatusBtn text="对象追踪" on className="ml-[2px] w-[70px]" />
        <StatusBtn text="DYN" className="ml-[4px] w-[32px]" />
        <StatusBtn text="线宽" on className="ml-[10px] w-[40px]" />
        <span className="ml-[4px] w-[180px] text-[#0000ff]">提交软件问题或增加新功能</span>
        <div className="ml-[13px] w-[72px] h-[20px] bg-white flex items-center pl-[3px] text-[13px] text-[#333]">
          <svg width="18" height="16" viewBox="0 0 18 16">
            <path d="M0 16L4 1h3L4 16zM7 16l2-7 3 7zM9 1h3l6 15h-4z" fill="#1f9a8a" />
          </svg>
          <span className="ml-[3px]">MxCAD</span>
        </div>
      </div>
      <div className="flex-1 bg-[#4a4a2a]" />
    </div>
  );
}
